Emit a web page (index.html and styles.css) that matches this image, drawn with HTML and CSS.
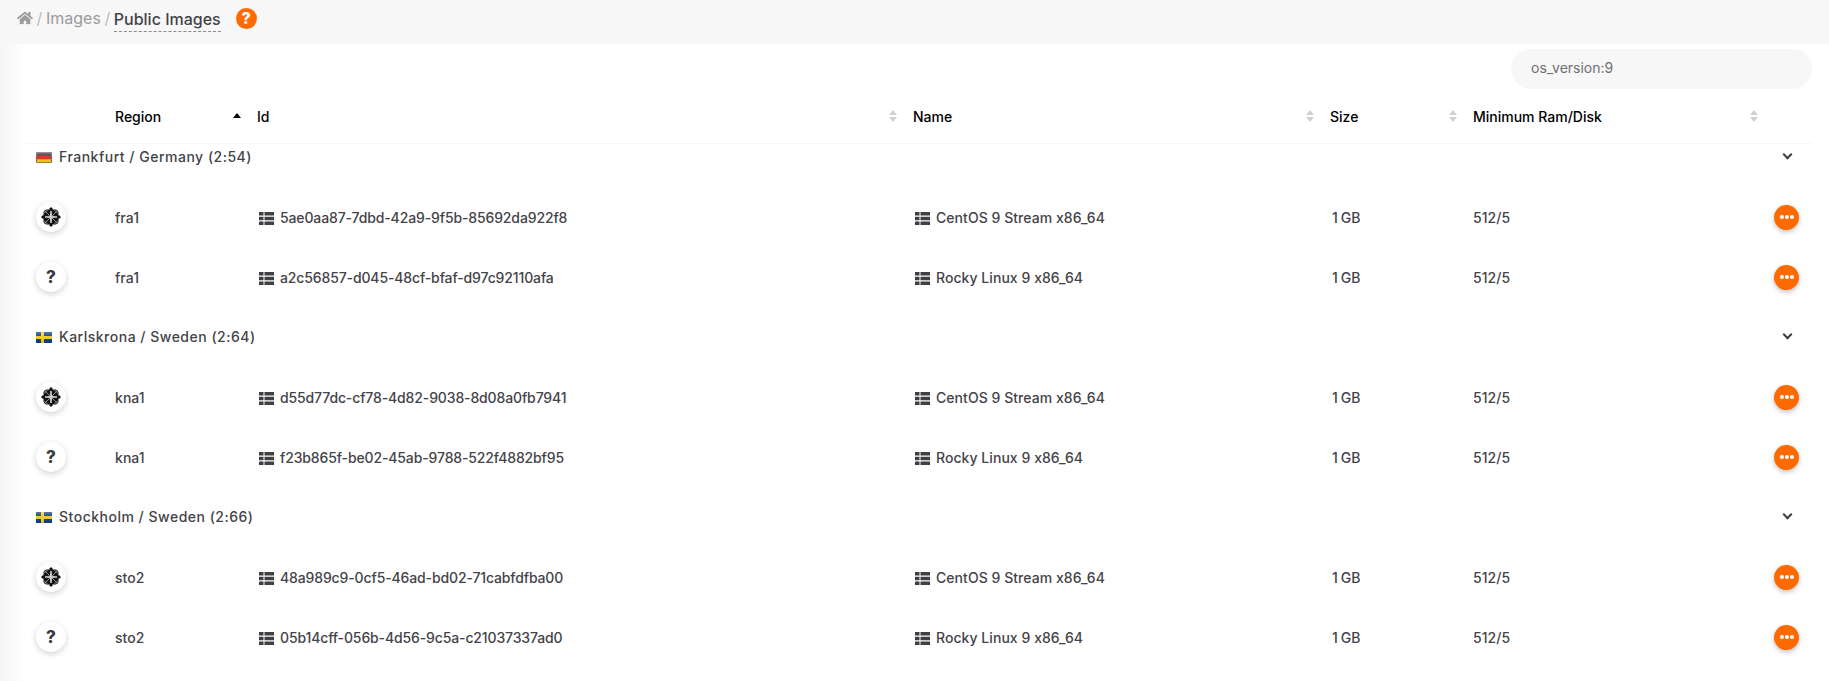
FILE: index.html
```html
<!DOCTYPE html>
<html lang="en">
<head>
    <meta charset="UTF-8">
    <meta name="viewport" content="width=device-width, initial-scale=1.0">
    <title>Public Images</title>
    <link rel="stylesheet" href="styles.css">
</head>
<body>

<svg class="defs" width="0" height="0">
    <defs>
        <linearGradient id="gloss" x1="0" y1="0" x2="0" y2="1">
            <stop offset="0" stop-color="#fff" stop-opacity="0.3"/>
            <stop offset="0.5" stop-color="#fff" stop-opacity="0"/>
            <stop offset="1" stop-color="#000" stop-opacity="0.12"/>
        </linearGradient>
    </defs>
    <symbol id="list" viewBox="0 0 15 13">
        <path d="M0 0h4.500v3.600H0zM5.500 0H15v3.600H5.500zM0 4.700h4.500v3.600H0zM5.500 4.700H15v3.600H5.500zM0 9.400h4.500V13H0zM5.500 9.400H15V13H5.500z"/>
    </symbol>
    <symbol id="dots" viewBox="0 0 14 4">
        <circle cx="2" cy="2" r="2"/><circle cx="7" cy="2" r="2"/><circle cx="12" cy="2" r="2"/>
    </symbol>
    <symbol id="centos" viewBox="0 0 20 20">
        <path d="M10 0l2 2-2 2-2-2zM10 16l2 2-2 2-2-2zM0 10l2-2 2 2-2 2zM16 10l2-2 2 2-2 2z" fill="#111"/>
        <path d="M5 2.500h10l2.500 2.500v10L15 17.500H5L2.500 15V5z" fill="#151515"/>
        <path d="M3 3l14 14M17 3L3 17M6.500 3L3 6.500M13.500 3L17 6.500M3 13.500L6.500 17M17 13.500L13.500 17" stroke="#9a9a9a" stroke-width="0.9" fill="none"/>
        <path d="M10 6.500l3.500 3.500-3.500 3.500L6.500 10z" fill="#777"/>
        <path d="M9.200 4h1.600v12H9.200zM4 9.200h12v1.600H4z" fill="#d8d8d8"/>
    </symbol>
    <symbol id="flag-de" viewBox="0 0 16 11">
        <path d="M0 0h16v11H0z" fill="#6a6a6a"/>
        <path d="M1 1h14v3H1z" fill="#404040"/>
        <path d="M1 4h14v3.400H1z" fill="#e0302a"/>
        <path d="M1 7.400h14V10H1z" fill="#f7c91e"/>
        <path d="M0 10h16v1H0z" fill="#b8962a"/>
        <path d="M0 0h16v11H0z" fill="url(#gloss)"/>
    </symbol>
    <symbol id="flag-se" viewBox="0 0 16 11">
        <path d="M0 0h16v11H0z" fill="#0d3f86"/>
        <path d="M5 0h3v11H5zM0 4h16v3H0z" fill="#f5c92a"/>
        <path d="M0 0h16v11H0z" fill="url(#gloss)"/>
    </symbol>
</svg>

<div class="topbar">
    <svg class="home" viewBox="0 0 576 512"><path d="M280 148L96 300v164c0 9 7 16 16 16l112-.3c9 0 16-7 16-16V368c0-9 7-16 16-16h64c9 0 16 7 16 16v95.600c0 9 7 16 16 16l112 .4c9 0 16-7 16-16V300L296 148c-5-4-11-4-16 0zM572 251l-84-69V44c0-7-5-12-12-12h-56c-7 0-12 5-12 12v72l-89-74c-18-14-43-14-61 0L4 251c-5 4-6 12-2 17l26 31c4 5 12 6 17 2L280 107c5-4 11-4 16 0l235 194c5 4 13 3 17-2l26-31c4-5 3-13-2-17z"/></svg>
    <span class="crumb-sep">/</span>
    <span class="crumb">Images</span>
    <span class="crumb-sep">/</span>
    <span class="crumb-current">Public Images</span>
    <span class="help">?</span>
</div>

<div class="main">
    <div class="search-row">
        <div class="search">os_version:9</div>
    </div>

    <table class="images">
        <colgroup>
            <col class="col-icon"><col class="col-region"><col class="col-id"><col class="col-name"><col class="col-size"><col class="col-min"><col class="col-action">
        </colgroup>
        <thead>
            <tr>
                <th></th>
                <th>Region<span class="arrow-up"></span></th>
                <th>Id<span class="arrows"></span></th>
                <th>Name<span class="arrows"></span></th>
                <th>Size<span class="arrows"></span></th>
                <th>Minimum Ram/Disk<span class="arrows"></span></th>
                <th></th>
            </tr>
        </thead>
        <tbody>
            <tr class="group first">
                <td colspan="6"><svg class="flag"><use href="#flag-de"/></svg>Frankfurt / Germany (2:54)</td>
                <td><span class="chevron"></span></td>
            </tr>
            <tr>
                <td><span class="os"><svg class="os-logo"><use href="#centos"/></svg></span></td>
                <td>fra1</td>
                <td class="uuid"><svg class="list"><use href="#list"/></svg>5ae0aa87-7dbd-42a9-9f5b-85692da922f8</td>
                <td><svg class="list"><use href="#list"/></svg>CentOS 9 Stream x86_64</td>
                <td class="size">1 GB</td>
                <td>512/5</td>
                <td><span class="more"><svg class="dots"><use href="#dots"/></svg></span></td>
            </tr>
            <tr>
                <td><span class="os">?</span></td>
                <td>fra1</td>
                <td class="uuid"><svg class="list"><use href="#list"/></svg>a2c56857-d045-48cf-bfaf-d97c92110afa</td>
                <td><svg class="list"><use href="#list"/></svg>Rocky Linux 9 x86_64</td>
                <td class="size">1 GB</td>
                <td>512/5</td>
                <td><span class="more"><svg class="dots"><use href="#dots"/></svg></span></td>
            </tr>
            <tr class="group">
                <td colspan="6"><svg class="flag"><use href="#flag-se"/></svg>Karlskrona / Sweden (2:64)</td>
                <td><span class="chevron"></span></td>
            </tr>
            <tr>
                <td><span class="os"><svg class="os-logo"><use href="#centos"/></svg></span></td>
                <td>kna1</td>
                <td class="uuid"><svg class="list"><use href="#list"/></svg>d55d77dc-cf78-4d82-9038-8d08a0fb7941</td>
                <td><svg class="list"><use href="#list"/></svg>CentOS 9 Stream x86_64</td>
                <td class="size">1 GB</td>
                <td>512/5</td>
                <td><span class="more"><svg class="dots"><use href="#dots"/></svg></span></td>
            </tr>
            <tr>
                <td><span class="os">?</span></td>
                <td>kna1</td>
                <td class="uuid"><svg class="list"><use href="#list"/></svg>f23b865f-be02-45ab-9788-522f4882bf95</td>
                <td><svg class="list"><use href="#list"/></svg>Rocky Linux 9 x86_64</td>
                <td class="size">1 GB</td>
                <td>512/5</td>
                <td><span class="more"><svg class="dots"><use href="#dots"/></svg></span></td>
            </tr>
            <tr class="group">
                <td colspan="6"><svg class="flag"><use href="#flag-se"/></svg>Stockholm / Sweden (2:66)</td>
                <td><span class="chevron"></span></td>
            </tr>
            <tr>
                <td><span class="os"><svg class="os-logo"><use href="#centos"/></svg></span></td>
                <td>sto2</td>
                <td class="uuid"><svg class="list"><use href="#list"/></svg>48a989c9-0cf5-46ad-bd02-71cabfdfba00</td>
                <td><svg class="list"><use href="#list"/></svg>CentOS 9 Stream x86_64</td>
                <td class="size">1 GB</td>
                <td>512/5</td>
                <td><span class="more"><svg class="dots"><use href="#dots"/></svg></span></td>
            </tr>
            <tr>
                <td><span class="os">?</span></td>
                <td>sto2</td>
                <td class="uuid"><svg class="list"><use href="#list"/></svg>05b14cff-056b-4d56-9c5a-c21037337ad0</td>
                <td><svg class="list"><use href="#list"/></svg>Rocky Linux 9 x86_64</td>
                <td class="size">1 GB</td>
                <td>512/5</td>
                <td><span class="more"><svg class="dots"><use href="#dots"/></svg></span></td>
            </tr>
        </tbody>
    </table>
</div>

</body>
</html>
```

FILE: styles.css
```css
html, body {
    height: 100%;
}
body {
    margin: 0;
    font-family: Inter, "Liberation Sans", sans-serif;
    font-size: 14px;
    font-feature-settings: "calt" 0;
    color: #434348;
    background: linear-gradient(to right, #f5f5f5 0, #fff 26px);
    overflow: hidden;
}
.defs {
    display: block;
    height: 0;
}
.topbar {
    display: flex;
    align-items: center;
    height: 44px;
    padding: 0 0 8px 17px;
    background: #f7f7f7;
    font-size: 16px;
    box-sizing: border-box;
}
.home {
    width: 16px;
    height: 14px;
    fill: #9b9b9b;
}
.crumb {
    color: #9b9b9b;
}
.crumb-sep {
    color: #bcbcbc;
    margin: 0 3.6px;
}
.crumb-current {
    color: #434348;
    font-weight: 500;
    border-bottom: 1px dashed #8a8a8a;
    padding-bottom: 2px;
    margin-top: 4px;
}
.help {
    display: flex;
    align-items: center;
    justify-content: center;
    width: 21px;
    height: 21px;
    margin-left: 15px;
    border-radius: 50%;
    background: #ff6a00;
    color: #fff;
    font-weight: 800;
    font-size: 16px;
}
.main {
    margin: 0 17px 0 26px;
}
.search-row {
    display: flex;
    justify-content: flex-end;
    padding-top: 5px;
}
.search {
    display: flex;
    align-items: center;
    width: 301px;
    height: 40px;
    box-sizing: border-box;
    padding: 0 0 3px 20px;
    border-radius: 20px;
    background: #f7f7f7;
    color: #6f6f74;
}
.images {
    width: 100%;
    table-layout: fixed;
    border-collapse: collapse;
}
.col-icon { width: 79px; }
.col-region { width: 142px; }
.col-id { width: 656px; }
.col-name { width: 417px; }
.col-size { width: 143px; }
.col-min { width: 301px; }
.images th {
    position: relative;
    height: 54px;
    padding: 1px 0 0 10px;
    box-sizing: border-box;
    text-align: left;
    color: #000;
    font-weight: 500;
    border-bottom: 1px solid #f7f7f7;
}
.arrows, .arrow-up {
    position: absolute;
    right: 6px;
    top: 50%;
}
.arrows::before, .arrows::after, .arrow-up::before {
    content: "";
    position: absolute;
    right: 0;
    border-left: 4px solid transparent;
    border-right: 4px solid transparent;
}
.arrows::before {
    top: -6px;
    border-bottom: 5px solid #d0d0d0;
}
.arrows::after {
    top: 1px;
    border-top: 5px solid #d0d0d0;
}
.arrow-up::before {
    top: -3px;
    border-bottom: 5px solid #000;
}
.images td {
    height: 60px;
    box-sizing: border-box;
    padding: 0 0 2px 10px;
    vertical-align: middle;
    font-weight: 450;
    letter-spacing: 0.05px;
}
.images .uuid {
    letter-spacing: -0.13px;
}
.images .size {
    padding-left: 12px;
    word-spacing: -1px;
}
.images .group td {
    padding-top: 17px;
    padding-bottom: 21px;
    font-weight: 500;
    letter-spacing: 0.5px;
}
.images .group.first td {
    height: 45px;
    padding-top: 2px;
}
.flag {
    width: 16px;
    height: 11px;
    margin-right: 7px;
    vertical-align: -1px;
}
.chevron {
    display: block;
    width: 5px;
    height: 5px;
    margin: 0 0 3px 10px;
    border-right: 2px solid #3c3c40;
    border-bottom: 2px solid #3c3c40;
    transform: rotate(45deg);
}
.os {
    display: flex;
    align-items: center;
    justify-content: center;
    width: 30px;
    height: 30px;
    border-radius: 50%;
    background: #fff;
    box-shadow: 0 2px 6px rgba(0, 0, 0, 0.18);
    color: #3c3c40;
    font-size: 17px;
    font-weight: 800;
}
.os-logo {
    width: 20px;
    height: 20px;
}
.list {
    width: 15px;
    height: 13px;
    margin: 0 6px 0 2px;
    fill: #3f3f44;
    vertical-align: -2px;
}
.more {
    display: flex;
    align-items: center;
    justify-content: center;
    width: 25px;
    height: 25px;
    border-radius: 50%;
    background: #ff6a00;
    box-shadow: 0 2px 5px rgba(0, 0, 0, 0.25);
}
.dots {
    width: 14px;
    height: 4px;
    fill: #fff;
}
```
